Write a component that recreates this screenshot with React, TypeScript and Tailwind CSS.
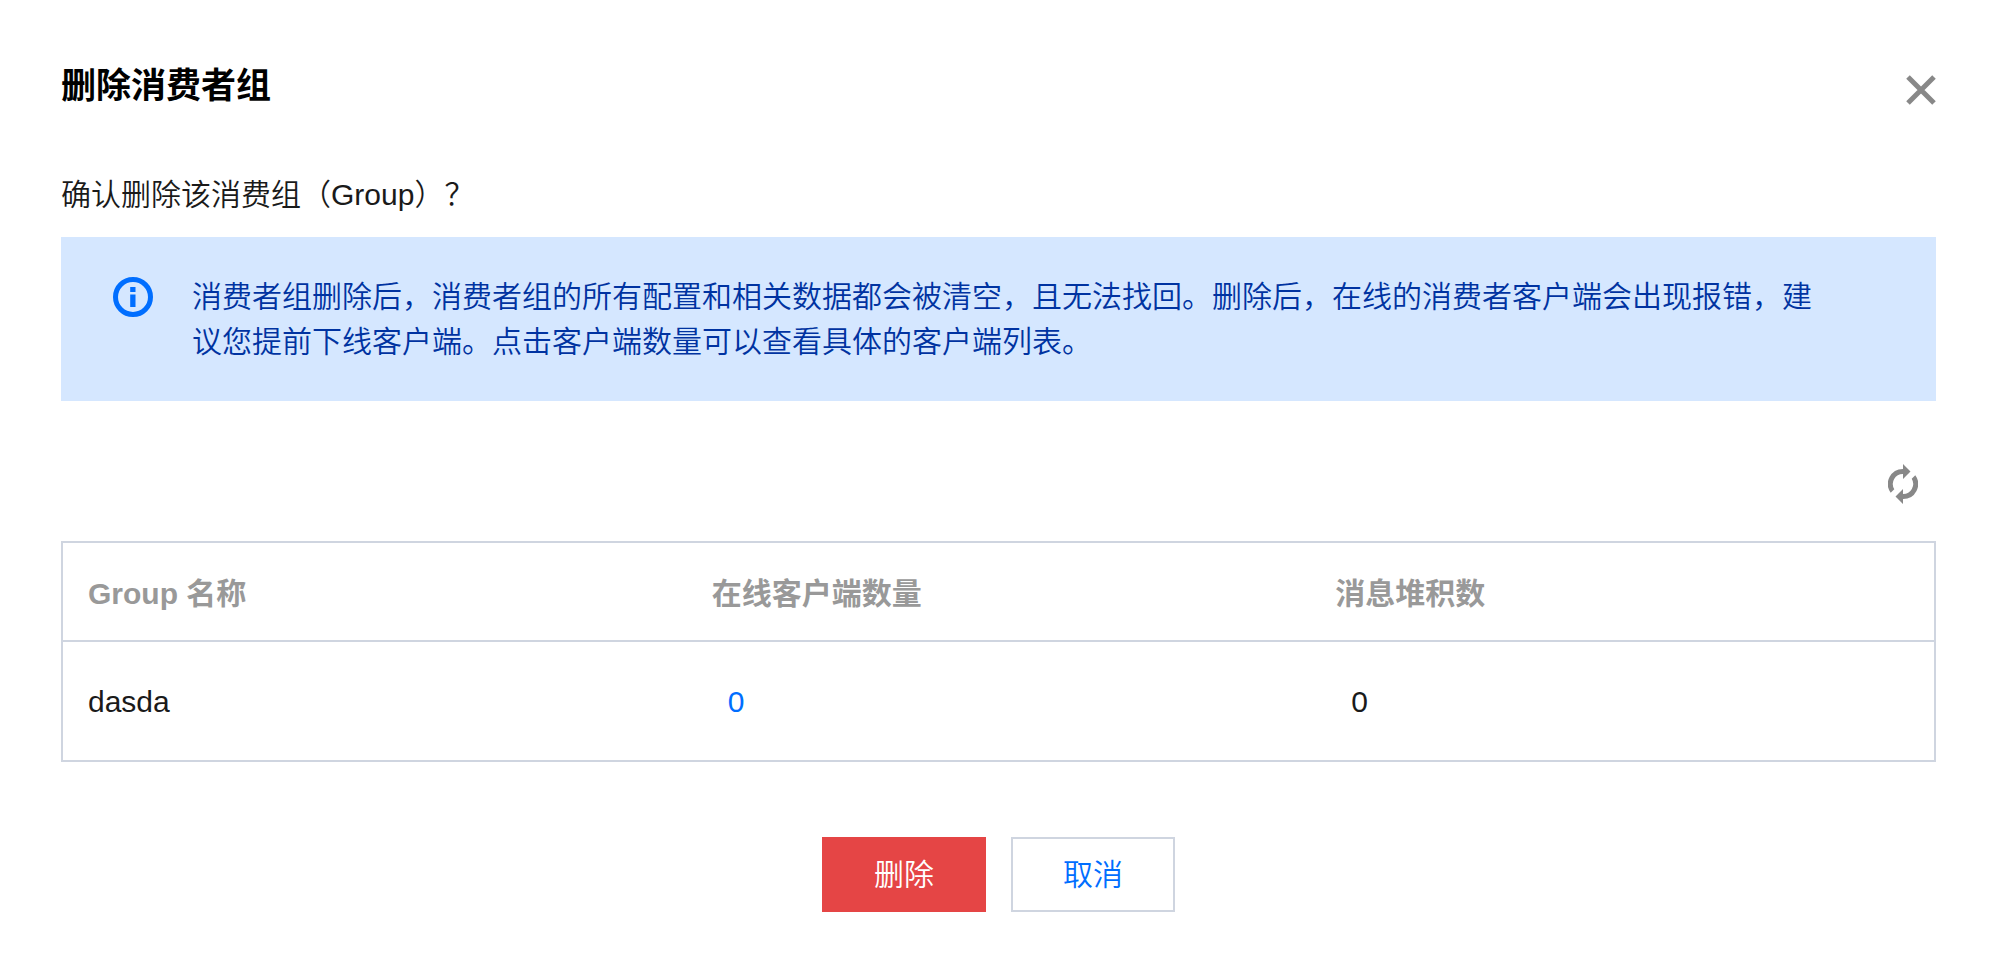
import React from 'react';

type Group = { name: string; clients: number; backlog: number };

const groups: Group[] = [{ name: 'dasda', clients: 0, backlog: 0 }];

function CloseIcon() {
  return (
    <svg className="size-[30px]" viewBox="0 0 30 30" fill="none" stroke="#888888" strokeWidth="5" aria-hidden="true">
      <path d="M2 2L28 28M28 2L2 28" />
    </svg>
  );
}

function InfoIcon() {
  return (
    <svg className="size-10 shrink-0" viewBox="0 0 40 40" aria-hidden="true">
      <circle cx="20" cy="20" r="17.5" fill="none" stroke="#006eff" strokeWidth="5" />
      <path d="M17.2 10h5.3v5h-5.3zM17.2 17.5h5.3v12.5h-5.3z" fill="#006eff" />
    </svg>
  );
}

function RefreshIcon() {
  return (
    <svg className="h-10 w-[30px]" viewBox="0 0 30 40" fill="#888888" aria-hidden="true">
      <path d="M15 0L22.5 7.5L15 15V10A10 10 0 0 0 6.3 25.2L2.7 28.8A15 15 0 0 1 15 5Z" />
      <path d="M15 40L7.5 32.5L15 25V30A10 10 0 0 0 23.7 14.8L27.3 11.2A15 15 0 0 1 15 35Z" />
    </svg>
  );
}

export default function App() {
  return (
    <main
      lang="zh-CN"
      role="dialog"
      aria-labelledby="dialog-title"
      className="min-h-screen bg-white pt-[61px] pr-[54px] pb-[54px] pl-[61px] font-['Liberation_Sans','Noto_Sans_CJK_SC',sans-serif] text-[30px] leading-[45px] font-[350] text-[#1a1a1a]"
    >
      <header className="flex items-center justify-between">
        <h1 id="dialog-title" className="text-[35px] leading-[50px] font-bold text-black">
          删除消费者组
        </h1>
        <button type="button" aria-label="关闭" className="mt-2">
          <CloseIcon />
        </button>
      </header>

      <p className="mt-[61px]">确认删除该消费组（Group）？</p>

      <section className="mt-5 flex bg-[#d5e7ff] py-[37px] pr-[100px] pl-[52px] text-[#0033a1]">
        <span className="mr-[39px] pt-[3px]">
          <InfoIcon />
        </span>
        <p>
          消费者组删除后，消费者组的所有配置和相关数据都会被清空，且无法找回。删除后，在线的消费者客户端会出现报错，建议您提前下线客户端。点击客户端数量可以查看具体的客户端列表。
        </p>
      </section>

      <div className="mt-[63px] flex justify-end pr-[18px]">
        <button type="button" aria-label="刷新">
          <RefreshIcon />
        </button>
      </div>

      <table className="mt-[37px] w-full table-fixed border-separate border-spacing-0 border-2 border-[#cfd5e0] text-left">
        <thead>
          <tr className="text-[#999999]">
            <th className="border-b-2 border-[#cfd5e0] px-[25px] pt-7 pb-6 font-bold">Group 名称</th>
            <th className="border-b-2 border-[#cfd5e0] px-[25px] pt-7 pb-6 font-bold">在线客户端数量</th>
            <th className="border-b-2 border-[#cfd5e0] px-[25px] pt-7 pb-6 font-bold">消息堆积数</th>
          </tr>
        </thead>
        <tbody>
          {groups.map((g) => (
            <tr key={g.name}>
              <td className="h-[118px] px-[25px]">{g.name}</td>
              <td className="h-[118px] px-[41px]">
                <a href="#clients" className="text-[#006eff]">{g.clients}</a>
              </td>
              <td className="h-[118px] px-[41px]">{g.backlog}</td>
            </tr>
          ))}
        </tbody>
      </table>

      <footer className="mt-[75px] flex justify-center gap-[25px]">
        <button type="button" className="h-[75px] w-[164px] bg-[#e54545] text-white">
          删除
        </button>
        <button type="button" className="h-[75px] w-[164px] border-2 border-[#cfd5e0] bg-white text-[#006eff]">
          取消
        </button>
      </footer>
    </main>
  );
}
